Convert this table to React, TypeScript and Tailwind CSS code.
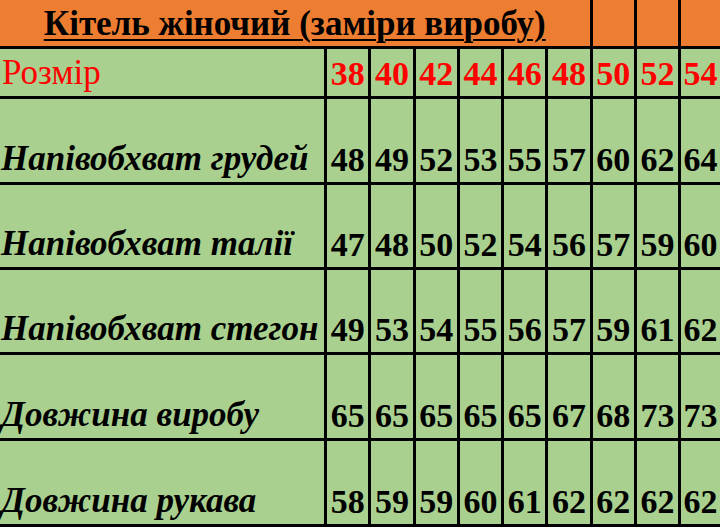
import React from "react";

const sizes = ["38", "40", "42", "44", "46", "48", "50", "52", "54"];

const rows: { label: string; values: string[]; height: string }[] = [
  { label: "Напівобхват грудей", values: ["48", "49", "52", "53", "55", "57", "60", "62", "64"], height: "h-[82.5px]" },
  { label: "Напівобхват талії", values: ["47", "48", "50", "52", "54", "56", "57", "59", "60"], height: "h-[82px]" },
  { label: "Напівобхват стегон", values: ["49", "53", "54", "55", "56", "57", "59", "61", "62"], height: "h-[82px]" },
  { label: "Довжина виробу", values: ["65", "65", "65", "65", "65", "67", "68", "73", "73"], height: "h-[83px]" },
  { label: "Довжина рукава", values: ["58", "59", "59", "60", "61", "62", "62", "62", "62"], height: "h-[83px]" },
];

const App = () => {
  return (
    <div className="w-[720px] h-[527px] overflow-hidden bg-[#a9d08e] font-['Liberation_Serif',serif]">
      <div className="grid grid-cols-[324px_repeat(8,41.25px)_1fr] gap-[3px] bg-black pb-[3px]">
        {/* title row */}
        <div className="col-span-7 h-[46px] bg-[#ed7d31] flex items-end justify-center pb-[5px]">
          <span className="text-[35px] leading-none font-bold text-black underline decoration-2 underline-offset-[4px] whitespace-nowrap">
            Кітель жіночий (заміри виробу)
          </span>
        </div>
        <div className="h-[46px] bg-[#ed7d31]" />
        <div className="h-[46px] bg-[#ed7d31]" />
        <div className="h-[46px] bg-[#ed7d31]" />

        {/* sizes row */}
        <div className="h-[47px] bg-[#a9d08e] flex items-end pl-[2px] pb-[6px]">
          <span className="text-[35px] leading-none text-[#ff0000]">Розмір</span>
        </div>
        {sizes.map((s) => (
          <div key={s} className="h-[47px] bg-[#a9d08e] flex items-end justify-center pb-[5px]">
            <span className="text-[34px] leading-none font-bold text-[#ff0000]">{s}</span>
          </div>
        ))}

        {rows.map((row) => (
          <React.Fragment key={row.label}>
            <div className={`${row.height} bg-[#a9d08e] flex items-end pl-[1px] pb-[6px]`}>
              <span className="text-[35px] leading-none font-bold italic text-black whitespace-nowrap">
                {row.label}
              </span>
            </div>
            {row.values.map((v, i) => (
              <div key={i} className={`${row.height} bg-[#a9d08e] flex items-end justify-center pb-[5px]`}>
                <span className="text-[34px] leading-none font-bold text-black">{v}</span>
              </div>
            ))}
          </React.Fragment>
        ))}
      </div>
    </div>
  );
};

export default App;
